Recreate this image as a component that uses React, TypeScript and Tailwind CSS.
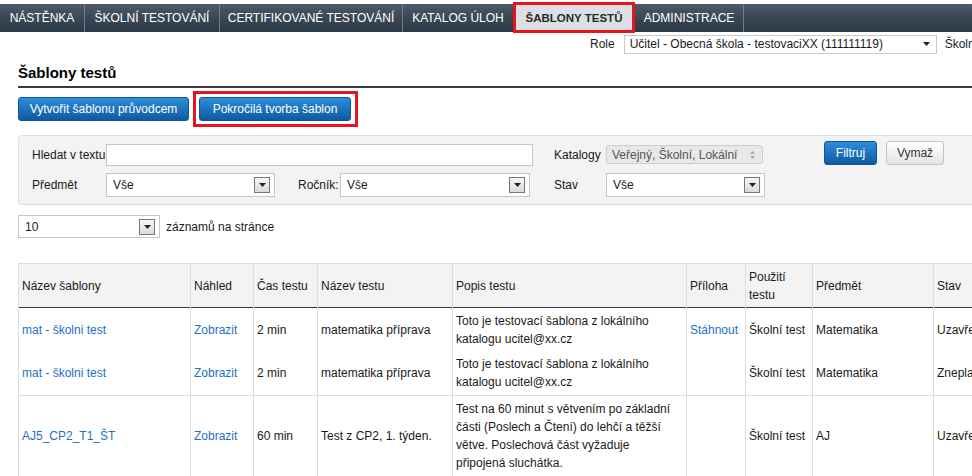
import React from 'react';

const Arrow: React.FC = () => (
    <span className="flex h-[16px] w-[16px] shrink-0 items-center justify-center border border-[#777] bg-gradient-to-b from-[#f6f6f6] to-[#dadada]">
        <svg width="7" height="4" viewBox="0 0 7 4"><path d="M0 0h7L3.5 4z" fill="#222" /></svg>
    </span>
);

const Select: React.FC<{ value: string; className?: string }> = ({ value, className }) => (
    <div className={`flex items-center justify-between border border-[#c6c6c6] bg-white pl-[6px] pr-[4px] ${className ?? ''}`}>
        <span>{value}</span>
        <Arrow />
    </div>
);

const navItems = [
    { label: 'NÁSTĚNKA', w: 'w-[85px]' },
    { label: 'ŠKOLNÍ TESTOVÁNÍ', w: 'w-[135px]' },
    { label: 'CERTIFIKOVANÉ TESTOVÁNÍ', w: 'w-[183px]' },
    { label: 'KATALOG ÚLOH', w: 'w-[111px]' },
    { label: 'ŠABLONY TESTŮ', w: 'w-[121px]', active: true },
    { label: 'ADMINISTRACE', w: 'w-[109px]' },
];

type Row = {
    name: string;
    time: string;
    test: string;
    desc: string;
    file?: string;
    use: string;
    subject: string;
    state: string;
    h: string;
    line: boolean;
};

const rows: Row[] = [
    { name: 'mat - školni test', time: '2 min', test: 'matematika příprava', desc: 'Toto je testovací šablona z lokálního katalogu ucitel@xx.cz', file: 'Stáhnout', use: 'Školní test', subject: 'Matematika', state: 'Uzavřená', h: 'h-[44px]', line: false },
    { name: 'mat - školni test', time: '2 min', test: 'matematika příprava', desc: 'Toto je testovací šablona z lokálního katalogu ucitel@xx.cz', use: 'Školní test', subject: 'Matematika', state: 'Zneplatněná', h: 'h-[44px]', line: true },
    { name: 'AJ5_CP2_T1_ŠT', time: '60 min', test: 'Test z CP2, 1. týden.', desc: 'Test na 60 minut s větvením po základní části (Poslech a Čtení) do lehčí a těžší větve. Poslechová část vyžaduje připojená sluchátka.', use: 'Školní test', subject: 'AJ', state: 'Uzavřená', h: 'h-[81px]', line: true },
];

const td = 'border-x border-[#dcdcdc] pl-[3px] pr-[8px] py-[3px] align-middle';

const App: React.FC = () => {
    return (
        <div className="h-[476px] w-[972px] overflow-hidden bg-white text-[12px] leading-[18px] text-[#1a1a1a]" style={{ fontFamily: '"Liberation Sans", Arial, sans-serif' }}>
            <div className="pt-[4px]">
                <nav className="flex h-[28px] w-[972px] bg-gradient-to-b from-[#4c5a68] via-[#3a4856] to-[#2b3845]">
                    {navItems.map((item) => (
                        <div
                            key={item.label}
                            className={`relative flex h-full ${item.w} items-center justify-center border-r border-[#6e7b88] whitespace-nowrap ${item.active ? 'bg-[#dcdfe4] text-[11.5px] font-bold text-[#2a2a2a]' : 'text-white'}`}
                        >
                            {item.label}
                            {item.active && <span className="absolute -top-[2px] -bottom-[1px] -left-[1px] -right-[1px] border-[3px] border-[#e5141d]" />}
                        </div>
                    ))}
                </nav>
            </div>

            <div className="w-[1040px] px-[18px]">
                <div className="flex h-[24px] items-center whitespace-nowrap pl-[572px]">
                    <span className="mr-[9px]">Role</span>
                    <div className="flex h-[19px] w-[313px] items-center justify-between border border-[#c9c9c9] bg-white pl-[5px] pr-[6px]">
                        <span>Učitel - Obecná škola - testovaciXX (111111119)</span>
                        <svg width="7" height="4" viewBox="0 0 7 4"><path d="M0 0h7L3.5 4z" fill="#222" /></svg>
                    </div>
                    <span className="ml-[8px]">Školní rok</span>
                </div>

                <div className="w-[954px] border-b-2 border-[#323c47] pt-[7px] pb-[3px] text-[15px] leading-[20px] font-bold text-black">
                    Šablony testů
                </div>

                <div className="mt-[9px] flex gap-[10px] text-white">
                    <button className="h-[24px] w-[171px] rounded-[3px] border border-[#0d5595] bg-gradient-to-b from-[#2e8dda] to-[#0d5ba2]">
                        Vytvořit šablonu průvodcem
                    </button>
                    <div className="relative">
                        <button className="h-[24px] w-[152px] rounded-[3px] border border-[#0d5595] bg-gradient-to-b from-[#2e8dda] to-[#0d5ba2]">
                            Pokročilá tvorba šablon
                        </button>
                        <span className="absolute -top-[6px] -bottom-[6px] -left-[6px] -right-[7px] border-[3px] border-[#e5141d]" />
                    </div>
                </div>

                <div className="mt-[14px] h-[70px] rounded-[4px] border border-[#dedede] bg-[#f3f3f3] pl-[13px] pt-[5px]">
                    <div className="flex h-[25px] items-start whitespace-nowrap">
                        <span className="mt-[3px] w-[74px] leading-[22px]">Hledat v textu</span>
                        <div className="mt-[3px] h-[22px] w-[427px] border border-[#c6c6c6] bg-white" />
                        <span className="mt-[3px] ml-[21px] w-[52px] leading-[22px]">Katalogy</span>
                        <div className="mt-[4px] flex h-[19px] w-[157px] items-center justify-between rounded-[3px] border border-[#cdcdcd] bg-[#e8e8e8] pl-[5px] pr-[7px] text-[#555]">
                            <span>Veřejný, Školní, Lokální</span>
                            <svg width="5" height="8" viewBox="0 0 5 8"><path d="M0 3h5L2.5 0zM0 5h5L2.5 8z" fill="#aaa" /></svg>
                        </div>
                        <button className="ml-[61px] h-[24px] w-[53px] rounded-[3px] border border-[#0d5595] bg-gradient-to-b from-[#2e8dda] to-[#0d5ba2] text-white">
                            Filtruj
                        </button>
                        <button className="ml-[9px] h-[24px] w-[58px] rounded-[3px] border border-[#c4c4c4] bg-gradient-to-b from-white to-[#e4e4e4] text-[#333]">
                            Vymaž
                        </button>
                    </div>
                    <div className="mt-[7px] flex h-[24px] items-center whitespace-nowrap">
                        <span className="w-[74px]">Předmět</span>
                        <Select value="Vše" className="h-[24px] w-[169px]" />
                        <span className="ml-[23px] w-[42px]">Ročník:</span>
                        <Select value="Vše" className="h-[24px] w-[190px]" />
                        <span className="ml-[24px] w-[52px]">Stav</span>
                        <Select value="Vše" className="h-[24px] w-[159px]" />
                    </div>
                </div>

                <div className="mt-[10px] flex items-center">
                    <Select value="10" className="h-[23px] w-[142px]" />
                    <span className="ml-[6px]">záznamů na stránce</span>
                </div>

                <table className="mt-[25px] w-[1015px] table-fixed border-collapse">
                    <colgroup>
                        <col className="w-[172px]" />
                        <col className="w-[63px]" />
                        <col className="w-[64px]" />
                        <col className="w-[135px]" />
                        <col className="w-[234px]" />
                        <col className="w-[59px]" />
                        <col className="w-[67px]" />
                        <col className="w-[121px]" />
                        <col className="w-[100px]" />
                    </colgroup>
                    <thead>
                        <tr className="h-[44px] border-t border-b border-t-[#dcdcdc] border-b-[#2f3a45] bg-[#f3f3f3] text-left">
                            <th className={`${td} font-normal`}>Název šablony</th>
                            <th className={`${td} font-normal`}>Náhled</th>
                            <th className={`${td} font-normal`}>Čas testu</th>
                            <th className={`${td} font-normal`}>Název testu</th>
                            <th className={`${td} font-normal`}>Popis testu</th>
                            <th className={`${td} font-normal`}>Příloha</th>
                            <th className={`${td} font-normal`}>Použití testu</th>
                            <th className={`${td} font-normal`}>Předmět</th>
                            <th className={`${td} font-normal`}>Stav</th>
                        </tr>
                    </thead>
                    <tbody>
                        {rows.map((r, i) => (
                            <tr key={i} className={`${r.h} ${r.line ? 'border-b border-[#dcdcdc]' : ''}`}>
                                <td className={`${td} text-[#1f6fc4]`}>{r.name}</td>
                                <td className={`${td} text-[#1f6fc4]`}>Zobrazit</td>
                                <td className={td}>{r.time}</td>
                                <td className={td}>{r.test}</td>
                                <td className={td}>{r.desc}</td>
                                <td className={`${td} whitespace-nowrap text-[#1f6fc4]`}>{r.file ?? ''}</td>
                                <td className={`${td} whitespace-nowrap`}>{r.use}</td>
                                <td className={td}>{r.subject}</td>
                                <td className={`${td} whitespace-nowrap`}>{r.state}</td>
                            </tr>
                        ))}
                    </tbody>
                </table>
            </div>
        </div>
    );
};

export default App;
